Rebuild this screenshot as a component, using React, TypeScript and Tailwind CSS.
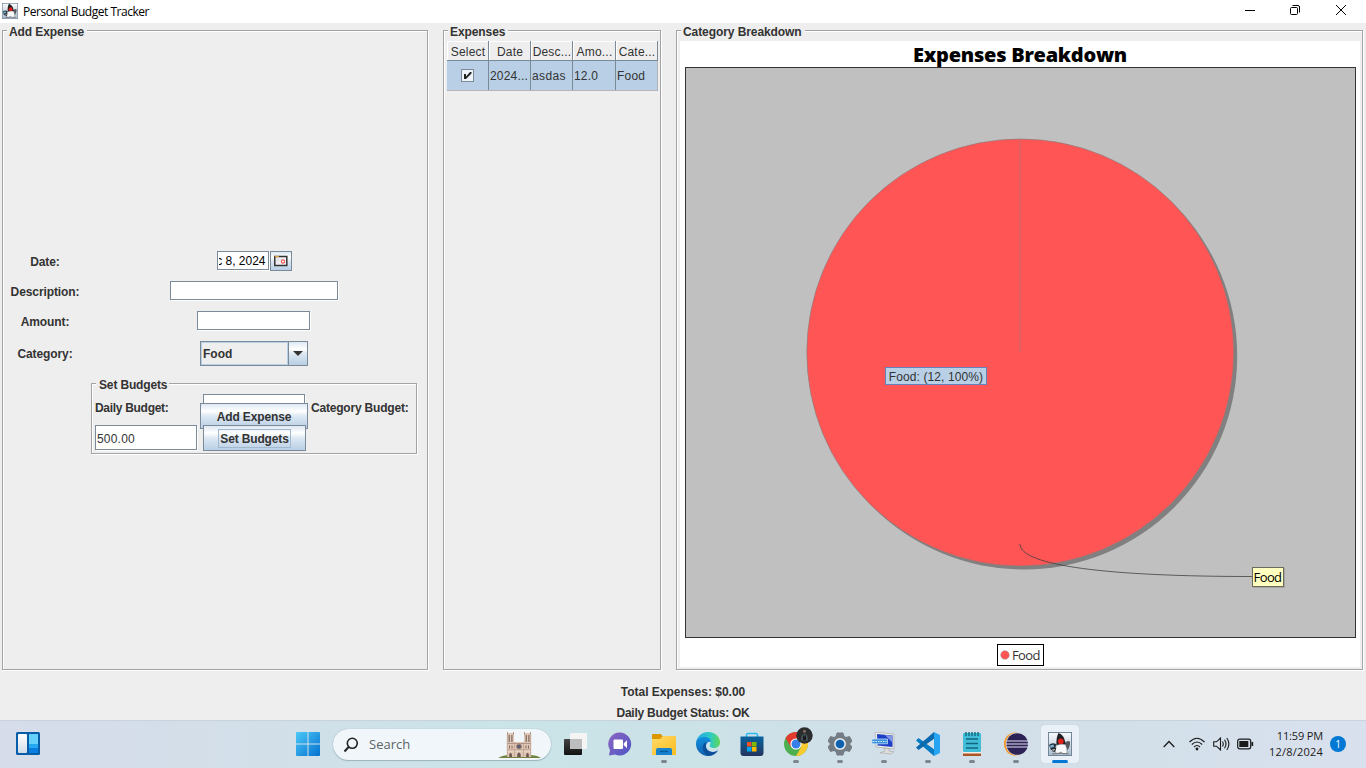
import type { ReactNode } from "react";

const etched = "border border-[#a3a3a3] shadow-[1px_1px_0_#fff,inset_1px_1px_0_#fff]";
const field =
  "border border-[#7a8a99] bg-white shadow-[1px_1px_0_#fff]";
const button =
  "flex items-center justify-center border border-[#7a8a99] bg-[linear-gradient(#dde8f3_0%,#ffffff_30%,#dde8f3_50%,#b8cfe5_100%)]";

function Panel({ title, className, children }: { title: string; className: string; children?: ReactNode }) {
  return (
    <section className={`relative shrink-0 ${etched} ${className}`}>
      <h2 className="absolute -top-[6px] left-1 bg-[#eee] pl-[2px] pr-[3px] text-[12px] leading-[15px] font-bold whitespace-nowrap tracking-[-0.080px]">
        {title}
      </h2>
      {children}
    </section>
  );
}

function Duke() {
  return (
    <svg viewBox="0 0 24 24" className="size-full">
      <defs>
        <linearGradient id="dk" x1="0" y1="0" x2="0" y2="1">
          <stop offset="0" stopColor="#fbfcfd" />
          <stop offset="1" stopColor="#a9bccd" />
        </linearGradient>
      </defs>
      <rect x=".5" y=".5" width="23" height="23" fill="url(#dk)" stroke="#72869a" />
      <path d="M1 13q3-3 7-1l1 5-6 1z" fill="#27313b" />
      <path d="M2 13.500l3.500-1 .5 2.500-3.500.8z" fill="#7eb5da" />
      <path d="M17 12q1-4 5-2.500.5 5-2.500 8.500l-2-1z" fill="#555a60" />
      <path d="M10.500 1Q14 2 16 6l2 6.500-9.500 1Q8 5 10.500 1z" fill="#1f2024" />
      <path d="M8 13.500q4.500-2.500 9.500-1 2 4 1.500 8.500l-3.500 1-2.500-2-3.500 1.500-2.500-1q-.3-4 1-7z" fill="#f7f8f9" stroke="#5d666e" strokeWidth=".5" />
      <path d="M3.500 19l5-4-1.500 5z" fill="#202225" />
      <path d="M4 18l3-1-1 1.800z" fill="#fff" />
      <circle cx="12.800" cy="9.300" r="2.900" fill="#e0201c" />
      <path d="M4 22q9-1.500 17 0" stroke="#77777c" fill="none" />
    </svg>
  );
}

function Row({ label, className, children }: { label: string; className: string; children: ReactNode }) {
  return (
    <div className={`flex items-center ${className}`}>
      <label className="w-[84px] pt-[2px] text-center font-bold tracking-[-0.100px]">{label}</label>
      <div className="ml-[4px] flex w-[326px] justify-center">{children}</div>
    </div>
  );
}

function AddExpense() {
  return (
    <Panel title="Add Expense" className="h-[640px] w-[426px]">
      <form className="flex flex-col pt-[220px] text-[12px] leading-[15px]">
        <Row label="Date:" className="h-5">
          <div className={`flex h-[19px] w-[52px] items-center justify-end pr-[2px] text-black ${field}`}>
            <span className="flex w-[47px] justify-end overflow-hidden pt-[2px] whitespace-nowrap">c 8, 2024</span>
          </div>
          <div className={`ml-px h-5 w-[22px] ${button}`}>
            <svg width="14" height="12" viewBox="0 0 14 12">
              <path d="M.8 1.500h12v9H.8z" fill="#f3f3f5" stroke="#333" strokeWidth="1.500" />
              <path d="M1 1.500h4" stroke="#e0a040" strokeWidth="1.200" />
              <path d="M4 2.500v7M2 5h6" stroke="#d5d5dc" strokeWidth=".7" />
              <circle cx="9" cy="6.500" r="1.600" fill="#fff" stroke="#ef5656" strokeWidth="1.200" />
            </svg>
          </div>
        </Row>
        <Row label="Description:" className="mt-[10px] h-5">
          <div className={`mb-px h-[19px] w-[168px] ${field}`} />
        </Row>
        <Row label="Amount:" className="mt-[10px] h-5">
          <div className={`mr-px mb-px h-[19px] w-[113px] ${field}`} />
        </Row>
        <Row label="Category:" className="mt-[10px] h-[25px]">
          <div className="flex h-[25px] w-[108px] border border-[#7a8a99]">
            <div className="flex flex-1 items-center border border-[#b8cfe5] pt-px pl-px font-bold">Food</div>
            <div className="flex w-[19px] items-center justify-center border-l border-[#7a8a99] bg-[linear-gradient(#dde8f3_0%,#ffffff_30%,#dde8f3_50%,#b8cfe5_100%)]">
              <svg width="10" height="5" viewBox="0 0 10 5">
                <path d="M0 0h10L5 5z" fill="#333" />
              </svg>
            </div>
          </div>
        </Row>
        <div className={`relative mt-[17px] ml-[88px] h-[71px] w-[326px] ${etched}`}>
          <h3 className="absolute -top-[6px] left-1 bg-[#eee] pr-[2px] pl-[3px] font-bold tracking-[-0.150px]">Set Budgets</h3>
          <div className="grid grid-cols-[102px_103px_108px] gap-x-[6px] gap-y-[6px] pt-[10px] pl-[3px]">
            <label className="flex h-[25px] items-center pt-[3px] font-bold tracking-[-0.300px]">Daily Budget:</label>
            <div className={`h-[25px] w-[102px] ${field}`} />
            <label className="-ml-px flex h-[25px] items-center pt-[3px] font-bold tracking-[-0.200px]">Category Budget:</label>
            <div className={`flex h-[25px] w-[102px] items-center pl-[1px] pt-[3px] tracking-[0.200px] ${field}`}>500.00</div>
            <div className={`relative z-10 h-[26px] font-bold tracking-[-0.150px] ${button}`}>
              <span className="border border-[#a3b8cc] px-px pt-[2px]">Set Budgets</span>
            </div>
          </div>
          <div className={`absolute top-[19px] left-[108px] h-[26px] w-[108px] pt-[2px] font-bold tracking-[-0.150px] ${button}`}>Add Expense</div>
        </div>
      </form>
    </Panel>
  );
}

const head = "h-5 border-r border-b border-[#7a8a99] text-center shadow-[inset_1px_1px_0_#fff] whitespace-nowrap overflow-hidden pt-[4px] pl-px";
const cell = "h-[29px] border-r border-[#7a8a99] pl-px pt-[8px] whitespace-nowrap overflow-hidden";

function Expenses() {
  return (
    <Panel title="Expenses" className="ml-[15px] h-[640px] w-[218px]">
      <div className="mt-[10px] ml-[3px] grid w-[211px] grid-cols-[42px_42px_42px_43px_42px] text-[12px] leading-[15px] tracking-[0.200px]">
        <div className={head}>Select</div>
        <div className={head}>Date</div>
        <div className={head}>Desc...</div>
        <div className={head}>Amo...</div>
        <div className={head}>Cate...</div>
      </div>
      <div className="ml-[3px] grid w-[211px] grid-cols-[42px_42px_42px_43px_42px] border-b border-[#b5b5b8] bg-[#b8cfe5] text-[12px] leading-[15px] tracking-[0.200px]">
        <div className={`${cell} flex justify-center pr-[2px]`}>
          <svg width="13" height="13" viewBox="0 0 13 13">
            <rect x=".5" y=".5" width="12" height="12" fill="#edf3f9" stroke="#7a8a99" />
            <path d="M3 5h2v2.500L9 3h1.500v1.500L5 10H3z" fill="#222" />
          </svg>
        </div>
        <div className={cell}>2024...</div>
        <div className={`${cell} tracking-[0.400px]`}>asdas</div>
        <div className={cell}>12.0</div>
        <div className={`${cell} border-r-[#b5b5b8]`}>Food</div>
      </div>
    </Panel>
  );
}

function Breakdown() {
  return (
    <Panel title="Category Breakdown" className="ml-[15px] h-[640px] w-[687px]">
      <div className="mt-[10px] ml-[3px] flex h-[626px] w-[680px] flex-col items-center bg-white">
        <div className="flex h-[26px] items-center pt-[2px] text-[20px] leading-[26px] font-extrabold whitespace-nowrap tracking-[-0.250px] text-black [font-family:'Open_Sans','Noto_Sans',sans-serif]">
          Expenses Breakdown
        </div>
        <div className="relative h-[571px] w-[671px] border border-[#333] bg-[#c0c0c0]">
          <svg width="669" height="569" viewBox="686 68 669 569">
            <circle cx="1023.700" cy="356" r="213.500" fill="#808080" />
            <circle cx="1020.300" cy="352.500" r="213.500" fill="#f55" stroke="#808080" strokeWidth=".6" />
            <path d="M1020 139v213" stroke="#808080" strokeOpacity=".45" />
            <path d="M1020 544C1020 566 1110 576.500 1252 576.500" stroke="#404040" strokeWidth=".8" fill="none" />
          </svg>
          <div className="absolute top-[299px] left-[199px] flex h-[18px] w-[102px] items-center justify-center border border-[#6382bf] bg-[#b8cfe5] pt-[2px] pl-px text-[12px] leading-[15px] whitespace-nowrap tracking-[0.100px]">
            Food: (12, 100%)
          </div>
          <div className="absolute top-[499px] left-[566px] flex h-[20px] w-[32px] items-center justify-center border border-[#6b6b5c] bg-[#ffffc0] pt-px text-[13px] tracking-[-0.600px] text-black shadow-[1px_1px_0_#a5a5a5] [font-family:'Open_Sans',sans-serif]">
            Food
          </div>
        </div>
        <div className="mt-[6px] ml-px flex h-[22px] w-[47px] items-center border border-black pl-[2px] text-[13px] tracking-[-0.600px] [font-family:'Open_Sans',sans-serif]">
          <svg width="10" height="10" viewBox="0 0 10 10" className="mr-[2px] shrink-0">
            <circle cx="5" cy="5" r="4.300" fill="#f55" stroke="#999" strokeWidth=".5" />
          </svg>
          <span className="pt-px">Food</span>
        </div>
      </div>
    </Panel>
  );
}

function TaskIcon({ children, dot, active }: { children: ReactNode; dot?: boolean; active?: boolean }) {
  return (
    <div className="flex h-[47px] w-11 shrink-0 justify-center pt-1">
      <div className={`flex h-[38px] w-[38px] flex-col items-center rounded ${active ? "bg-[#e9f0f8] shadow-[0_0_1px_#b4c0cc]" : ""}`}>
        <div className="mt-[7px] flex h-6 w-6 shrink-0 items-center justify-center">{children}</div>
        {dot && <i className={active ? "mt-[4px] h-[3px] w-4 shrink-0 rounded-full bg-[#0078d4]" : "mt-[4px] h-[3px] w-[6px] shrink-0 rounded-full bg-[#7d858c]"} />}
      </div>
    </div>
  );
}

function NotreDame() {
  return (
    <svg width="46" height="28" viewBox="0 0 46 28">
      <path d="M1 27q5-3 12-3h19q8 0 12 3z" fill="#6e8440" />
      <path d="M10 2h7v9h10V2h7v24H10z" fill="#e0c6b5" />
      <path d="M10.500 1v3M16.500 1v3M27.500 1v3M33.500 1v3" stroke="#b39a8a" />
      <path d="M12.200 4v7M14.900 4v7M29.200 4v7M31.900 4v7" stroke="#7d6a64" strokeWidth="1.200" />
      <path d="M10 12.500h24M10 19h24" stroke="#a58878" strokeWidth=".8" />
      <path d="M10 20h24" stroke="#f3e0d2" strokeWidth=".9" />
      <circle cx="22" cy="15.500" r="2.500" fill="#5b5c70" stroke="#a98c7a" />
      <path d="M12.500 14.500v3M15 14.500v3M29 14.500v3M31.500 14.500v3" stroke="#7d6a64" />
      <path d="M12.300 26v-3l1.300-1.300 1.300 1.300v3zM20.300 26v-3l1.700-1.700 1.700 1.700v3zM29.200 26v-3l1.300-1.300 1.300 1.300v3z" fill="#6c5650" />
      <path d="M17.500 11v15M26.500 11v15M10.300 3v23M33.700 3v23" stroke="#bfa392" strokeWidth=".8" />
    </svg>
  );
}

function Taskbar() {
  return (
    <footer className="flex h-12 items-center border-t border-[#c9d3de] bg-[linear-gradient(90deg,#d6dcea_0%,#d2dfe9_20%,#cae4e8_36%,#cbe2e7_52%,#d2dfe9_65%,#d3e0ea_85%,#d9e0ee_100%)] [font-family:'Open_Sans',sans-serif]">
      <div className="mb-px ml-4 w-[270px] shrink-0">
        <svg width="24" height="24" viewBox="0 0 24 24">
          <defs><linearGradient id="wi" x1="0" x2="0" y1="0" y2="1"><stop stopColor="#fff" /><stop offset="1" stopColor="#cfdde9" /></linearGradient></defs>
          <rect width="24" height="23" rx="1.500" fill="#075da8" />
          <rect x="2" y="2" width="9" height="19" rx="1" fill="url(#wi)" />
          <rect x="13" y="2" width="9" height="10" fill="#65d1fb" />
          <rect x="13" y="12" width="9" height="5" fill="#24a8ef" />
          <rect x="13" y="16" width="9" height="5" fill="#087fe0" />
        </svg>
      </div>
      <TaskIcon>
        <svg width="24" height="24" viewBox="0 0 24 24">
          <defs><linearGradient id="wn" gradientUnits="userSpaceOnUse" x1="0" x2="24" y1="0" y2="24"><stop stopColor="#4cc9f8" /><stop offset="1" stopColor="#0470cf" /></linearGradient></defs>
          <path d="M1 0h10.500v11.500H0V1q0-1 1-1zM12.500 0H23q1 0 1 1v10.500H12.500zM0 12.500h11.500V24H1q-1 0-1-1zM12.500 12.500H24V23q0 1-1 1H12.500z" fill="url(#wn)" />
        </svg>
      </TaskIcon>
      <div className="ml-[3px] flex h-[31px] w-[218px] shrink-0 items-center rounded-full bg-[#f0f6f9] shadow-[0_0_1px_#8ba8b2,0_1px_1px_#9cb5bd]">
        <svg width="16" height="16" viewBox="0 0 16 16" className="ml-[10px]" fill="none" stroke="#222" strokeWidth="1.600">
          <circle cx="9.300" cy="6.300" r="5" />
          <path d="M5.600 10L1.500 14.500" strokeWidth="2" />
        </svg>
        <span className="ml-[10px] text-[13px] text-[#5d6366]">Search</span>
        <div className="ml-auto mr-[8px]"><NotreDame /></div>
      </div>
      <div className="ml-[3px] flex">
        <TaskIcon>
          <svg width="24" height="24" viewBox="0 0 24 24">
            <defs><linearGradient id="tv" x1="0" x2="0" y1="0" y2="1"><stop stopColor="#444" /><stop offset="1" stopColor="#111" /></linearGradient></defs>
            <rect x="0" y="7" width="18" height="16" rx="1" fill="url(#tv)" />
            <rect x="6" y="1" width="17" height="16" rx="1" fill="#f4f4f4" />
            <path d="M6 7h12v10H6z" fill="#bcbdbe" />
          </svg>
        </TaskIcon>
        <TaskIcon>
          <svg width="24" height="24" viewBox="0 0 24 24">
            <defs><linearGradient id="ch" x1="0" x2="1" y1="0" y2="1"><stop stopColor="#8d65c2" /><stop offset="1" stopColor="#4d55c4" /></linearGradient></defs>
            <path d="M12 .5A11.500 11.500 0 1 1 7 22.500L1 23.500 2 18A11.500 11.500 0 0 1 12 .5z" fill="url(#ch)" />
            <rect x="5.500" y="7.500" width="9.500" height="9.500" rx="1" fill="#fff" />
            <path d="M15.700 11.500l3.300-3.200v8L15.700 13z" fill="#fff" />
          </svg>
        </TaskIcon>
        <TaskIcon dot>
          <svg width="24" height="24" viewBox="0 0 24 24">
            <defs><linearGradient id="fo" x1="0" x2="1" y1="0" y2="1"><stop stopColor="#ffda68" /><stop offset="1" stopColor="#f9bc20" /></linearGradient></defs>
            <path d="M0 3q0-1 1-1h8l2 3-2 3H0z" fill="#dc9700" />
            <path d="M0 7h8l3-3h12q1 0 1 1v18H0z" fill="url(#fo)" />
            <path d="M4 23v-5q0-2 2-2h12q2 0 2 2v5z" fill="#1683cf" />
            <path d="M8 19.500h8" stroke="#075b9c" strokeWidth="1.400" />
          </svg>
        </TaskIcon>
        <TaskIcon>
          <svg width="24" height="24" viewBox="0 0 24 24">
            <defs>
              <linearGradient id="e1" x1="0" x2="1"><stop stopColor="#2aa6e8" /><stop offset=".6" stopColor="#2ccbc4" /><stop offset="1" stopColor="#61d756" /></linearGradient>
              <linearGradient id="e2" x1="0" x2="0" y1="0" y2="1"><stop stopColor="#1191dd" /><stop offset="1" stopColor="#125fae" /></linearGradient>
            </defs>
            <path d="M0 11C1 4 6 0 12 0c8 0 12 6 12 10 0 4-3 6-6 6-3 0-5-1-4-3 2-5-2-7-5-7-4 0-8 2-9 5z" fill="url(#e1)" />
            <path d="M0 12C0 7 4 5 8 5c4 0 7 2 7 5-2-1-5 1-5 4 0 4 4 6 7 6 2 0 4-1 5-2-3 5-7 6-10 6C5 24 0 18 0 12z" fill="url(#e2)" />
            <path d="M10 10c-4 2-5 8 1 13.500 5 .5 9-1.500 11-5-7 4-13-1-12-4.500z" fill="#0d4f99" />
          </svg>
        </TaskIcon>
        <TaskIcon>
          <svg width="24" height="24" viewBox="0 0 24 24">
            <defs><linearGradient id="st" x1="0" x2="0" y1="0" y2="1"><stop stopColor="#08659f" /><stop offset="1" stopColor="#24345d" /></linearGradient></defs>
            <path d="M6.500 6V3q0-1.500 1.500-1.500h8q1.500 0 1.500 1.500v3" fill="none" stroke="#2fb9ef" strokeWidth="1.600" />
            <path d="M.5 4.500h23V21q0 3-3 3h-17q-3 0-3-3z" fill="url(#st)" />
            <path d="M7 10h4.500v4.500H7z" fill="#f25022" /><path d="M12 10h4.500v4.500H12z" fill="#7fba00" />
            <path d="M7 15h4.500v4.500H7z" fill="#00a4ef" /><path d="M12 15h4.500v4.500H12z" fill="#ffb900" />
          </svg>
        </TaskIcon>
        <TaskIcon dot>
          <svg width="24" height="24" viewBox="0 0 24 24" overflow="visible">
            <circle cx="12" cy="12" r="12" fill="#4caf50" />
            <path d="M12 12L1.600 6A12 12 0 0 1 22.400 6z" fill="#e33b2e" />
            <path d="M1.600 6L6.800 15 12 12V6z" fill="#e33b2e" />
            <path d="M12 6h10.400A12 12 0 0 1 12 24l5.200-9z" fill="#fccb2f" />
            <circle cx="12" cy="12" r="5.600" fill="#fff" /><circle cx="12" cy="12" r="4.500" fill="#377fe8" />
            <circle cx="20.500" cy="3.500" r="8.200" fill="#2a2c2d" />
            <path d="M17 8.500q0-7 3.500-7T24 8.500z" fill="#46555a" /><circle cx="20.500" cy="-.8" r="1.500" fill="#80695e" />
            <path d="M19 2l1.500 3L22 2v6h-3z" fill="#17191b" />
          </svg>
        </TaskIcon>
        <TaskIcon dot>
          <svg width="24" height="24" viewBox="0 0 24 24">
            <path d="M9 1h6l1 3.500 2 1 3.500-1L24 9l-2.500 3L24 15l-2.500 4.500-3.500-1-2 1L15 23H9l-1-3.500-2-1-3.500 1L0 15l2.500-3L0 9l2.500-4.500 3.500 1 2-1z" fill="#737b83" stroke="#737b83" strokeLinejoin="round" />
            <circle cx="12" cy="12" r="6" fill="#d9e4ed" /><circle cx="12" cy="12" r="4.300" fill="#0e61ae" />
          </svg>
        </TaskIcon>
        <TaskIcon dot>
          <svg width="24" height="24" viewBox="0 0 24 24">
            <path d="M3 0l19 2v15L4 15z" fill="#ecece8" stroke="#aaa" strokeWidth=".7" />
            <path d="M5 2l15.500 1.500v11.500L5.500 13.500z" fill="#1d3fc6" />
            <path d="M13 3l7.500.7v7z" fill="#8297e8" />
            <path d="M0 7h15.500v4.800H0z" fill="#3c90dc" stroke="#d6ecff" strokeWidth=".7" />
            <path d="M1 9.500h13.500" stroke="#d6ecff" strokeDasharray="1.500 1" />
            <path d="M12 16l5 1v2l5 .8-3 2.200-11-1.200 5-1.800z" fill="#dededa" stroke="#999" strokeWidth=".5" />
          </svg>
        </TaskIcon>
        <TaskIcon dot>
          <svg width="24" height="24" viewBox="0 0 24 24">
            <path d="M18 0v24L0 8.500 2.500 6 18 17z" fill="#087bc5" />
            <path d="M18 0v7L2.500 18 0 15.500z" fill="#0b69ad" />
            <path d="M18 0l6 3v18l-6 3z" fill="#27a5f2" />
            <path d="M18 7v10l-7-5z" fill="#d2dfe9" />
          </svg>
        </TaskIcon>
        <TaskIcon dot>
          <svg width="24" height="24" viewBox="0 0 24 24">
            <path d="M3 21h18v3H3z" fill="#ad5523" /><path d="M3 19h18v2.500H3z" fill="#f4efe9" />
            <rect x="3" y="1" width="18" height="19" rx="1" fill="#42bdd8" />
            <path d="M6 0v4M9 0v4M12 0v4M15 0v4M18 0v4" stroke="#12667f" strokeWidth="1.400" />
            <path d="M6 7h12M6 11.500h12M6 16h12" stroke="#12667f" strokeWidth="1.500" />
          </svg>
        </TaskIcon>
        <TaskIcon dot>
          <svg width="24" height="24" viewBox="0 0 24 24">
            <circle cx="11.500" cy="12" r="11.500" fill="#f8941d" /><circle cx="13" cy="12" r="11.300" fill="#d8e2ec" />
            <circle cx="13.200" cy="12" r="10.800" fill="#2c2255" />
            <path d="M2.500 9h21.500M2 12h22M2.500 15h21.500" stroke="#e7e4f2" strokeWidth="1.200" />
          </svg>
        </TaskIcon>
        <TaskIcon dot active><Duke /></TaskIcon>
      </div>
      <div className="ml-auto flex items-center pr-5 pb-px text-[#1b1b1b]">
        <svg width="12" height="8" viewBox="0 0 12 8" fill="none" stroke="currentColor" strokeWidth="1.300"><path d="M.7 7L6 1.500 11.300 7" /></svg>
        <svg width="16" height="14" viewBox="0 0 16 14" className="ml-[14px]" fill="none" stroke="currentColor" strokeWidth="1.100">
          <path d="M.5 5Q8-2.500 15.500 5M2.800 7.500Q8 2.500 13.200 7.500M5 10Q8 7 11 10" /><circle cx="8" cy="12" r="1.400" fill="currentColor" stroke="none" />
        </svg>
        <svg width="17" height="14" viewBox="0 0 17 14" className="ml-2" fill="none" stroke="currentColor" strokeWidth="1.100">
          <path d="M.7 4.800h2.800L7.500 1v12L3.500 9.200H.7zM9.500 4.500q1.500 2.500 0 5M11.500 2.800q3 4.200 0 8.400M13.800 1q4.200 6 0 12" />
        </svg>
        <svg width="17" height="12" viewBox="0 0 17 12" className="ml-[7px]" fill="none" stroke="currentColor" strokeWidth="1.200">
          <rect x=".7" y="1.200" width="13" height="9.600" rx="2" /><rect x="2.300" y="3" width="9" height="6" fill="currentColor" stroke="none" /><path d="M15.300 4v4" strokeWidth="1.700" />
        </svg>
        <div className="ml-[14px] w-[55px] text-right text-[11px] leading-[16px] whitespace-nowrap">
          <div className="-ml-2 tracking-[-0.150px]">11:59 PM</div>
          <div className="tracking-[0.200px]">12/8/2024</div>
        </div>
        <div className="ml-[7px] flex size-4 items-center justify-center rounded-full bg-[#0078d4] text-[10px] text-white">1</div>
      </div>
    </footer>
  );
}

export default function App() {
  return (
    <div className="flex h-[768px] w-[1366px] flex-col overflow-hidden bg-[#eee] text-[#333] [font-family:'Liberation_Sans',Arial,sans-serif]">
      <header className="flex h-[23px] shrink-0 items-center bg-white text-black">
        <div className="mb-px ml-[2px] size-4"><Duke /></div>
        <span className="ml-[5px] pt-px text-[12px] tracking-[-0.480px] [font-family:'Open_Sans',sans-serif]">Personal Budget Tracker</span>
        <div className="mb-[3px] ml-auto flex items-center pr-5">
          <svg width="10" height="10" viewBox="0 0 10 10" stroke="#000"><path d="M0 5.500h10" /></svg>
          <svg width="10" height="10" viewBox="0 0 10 10" stroke="#000" fill="none" className="ml-[35px]"><rect x=".5" y="2.500" width="7" height="7" rx="1" /><path d="M2.500.5H8q1.500 0 1.500 1.500v5.500" /></svg>
          <svg width="10" height="10" viewBox="0 0 10 10" stroke="#000" className="ml-9"><path d="M0 0l10 10M10 0L0 10" /></svg>
        </div>
      </header>
      <main className="flex h-[647px] shrink-0 pt-[7px] pl-[2px]">
        <AddExpense />
        <Expenses />
        <Breakdown />
      </main>
      <div className="flex h-[50px] shrink-0 flex-col items-center gap-[6px] pt-[15px] text-[12px] leading-[15px] font-bold">
        <p>Total Expenses: $0.00</p>
        <p className="tracking-[-0.250px]">Daily Budget Status: OK</p>
      </div>
      <Taskbar />
    </div>
  );
}
